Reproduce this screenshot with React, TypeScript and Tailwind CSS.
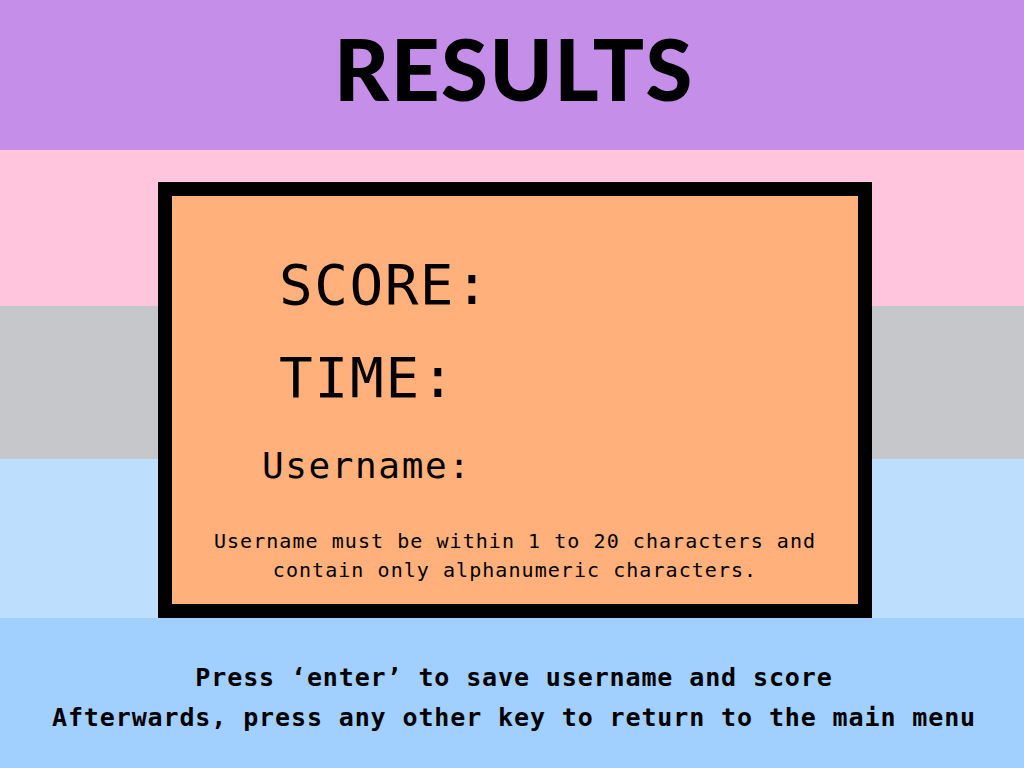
export default function App() {
  return (
    <div className="w-[1024px] h-[768px] flex flex-col overflow-hidden">
      <header className="h-[150px] bg-[#c58ee8] flex items-center justify-center">
        <h1 className="font-['Lato',sans-serif] font-black text-[85px] leading-none tracking-[1.5px] text-black pb-[14px] pl-[4px]">
          RESULTS
        </h1>
      </header>

      <section className="h-[468px] bg-[linear-gradient(to_bottom,#ffc5dc_0px,#ffc5dc_156px,#c6c7ca_156px,#c6c7ca_309px,#bddffd_309px)] pt-[32px] pl-[158px]">
        <div className="w-[714px] h-[436px] border-[14px] border-black bg-[#ffb07b] font-['DejaVu_Sans_Mono',monospace] text-black">
          <div className="pl-[107px] pt-[61px] text-[56px] leading-none tracking-[1.5px]">SCORE:</div>
          <div className="pl-[107px] mt-[37px] text-[56px] leading-none tracking-[1.8px]">TIME:</div>
          <div className="pl-[90px] mt-[42px] text-[36px] leading-none tracking-[1.6px]">Username:</div>
          <p className="mt-[43px] text-center text-[20px] leading-[29px] tracking-[1.05px]">
            Username must be within 1 to 20 characters and
            <br />
            contain only alphanumeric characters.
          </p>
        </div>
      </section>

      <footer className="h-[150px] bg-[#a1d0fe] pt-[40px] pl-[4px] text-center font-['DejaVu_Sans_Mono',monospace] font-bold text-[25px] leading-[40px] tracking-[0.88px] text-black">
        <p>Press ‘enter’ to save username and score</p>
        <p>Afterwards, press any other key to return to the main menu</p>
      </footer>
    </div>
  );
}
